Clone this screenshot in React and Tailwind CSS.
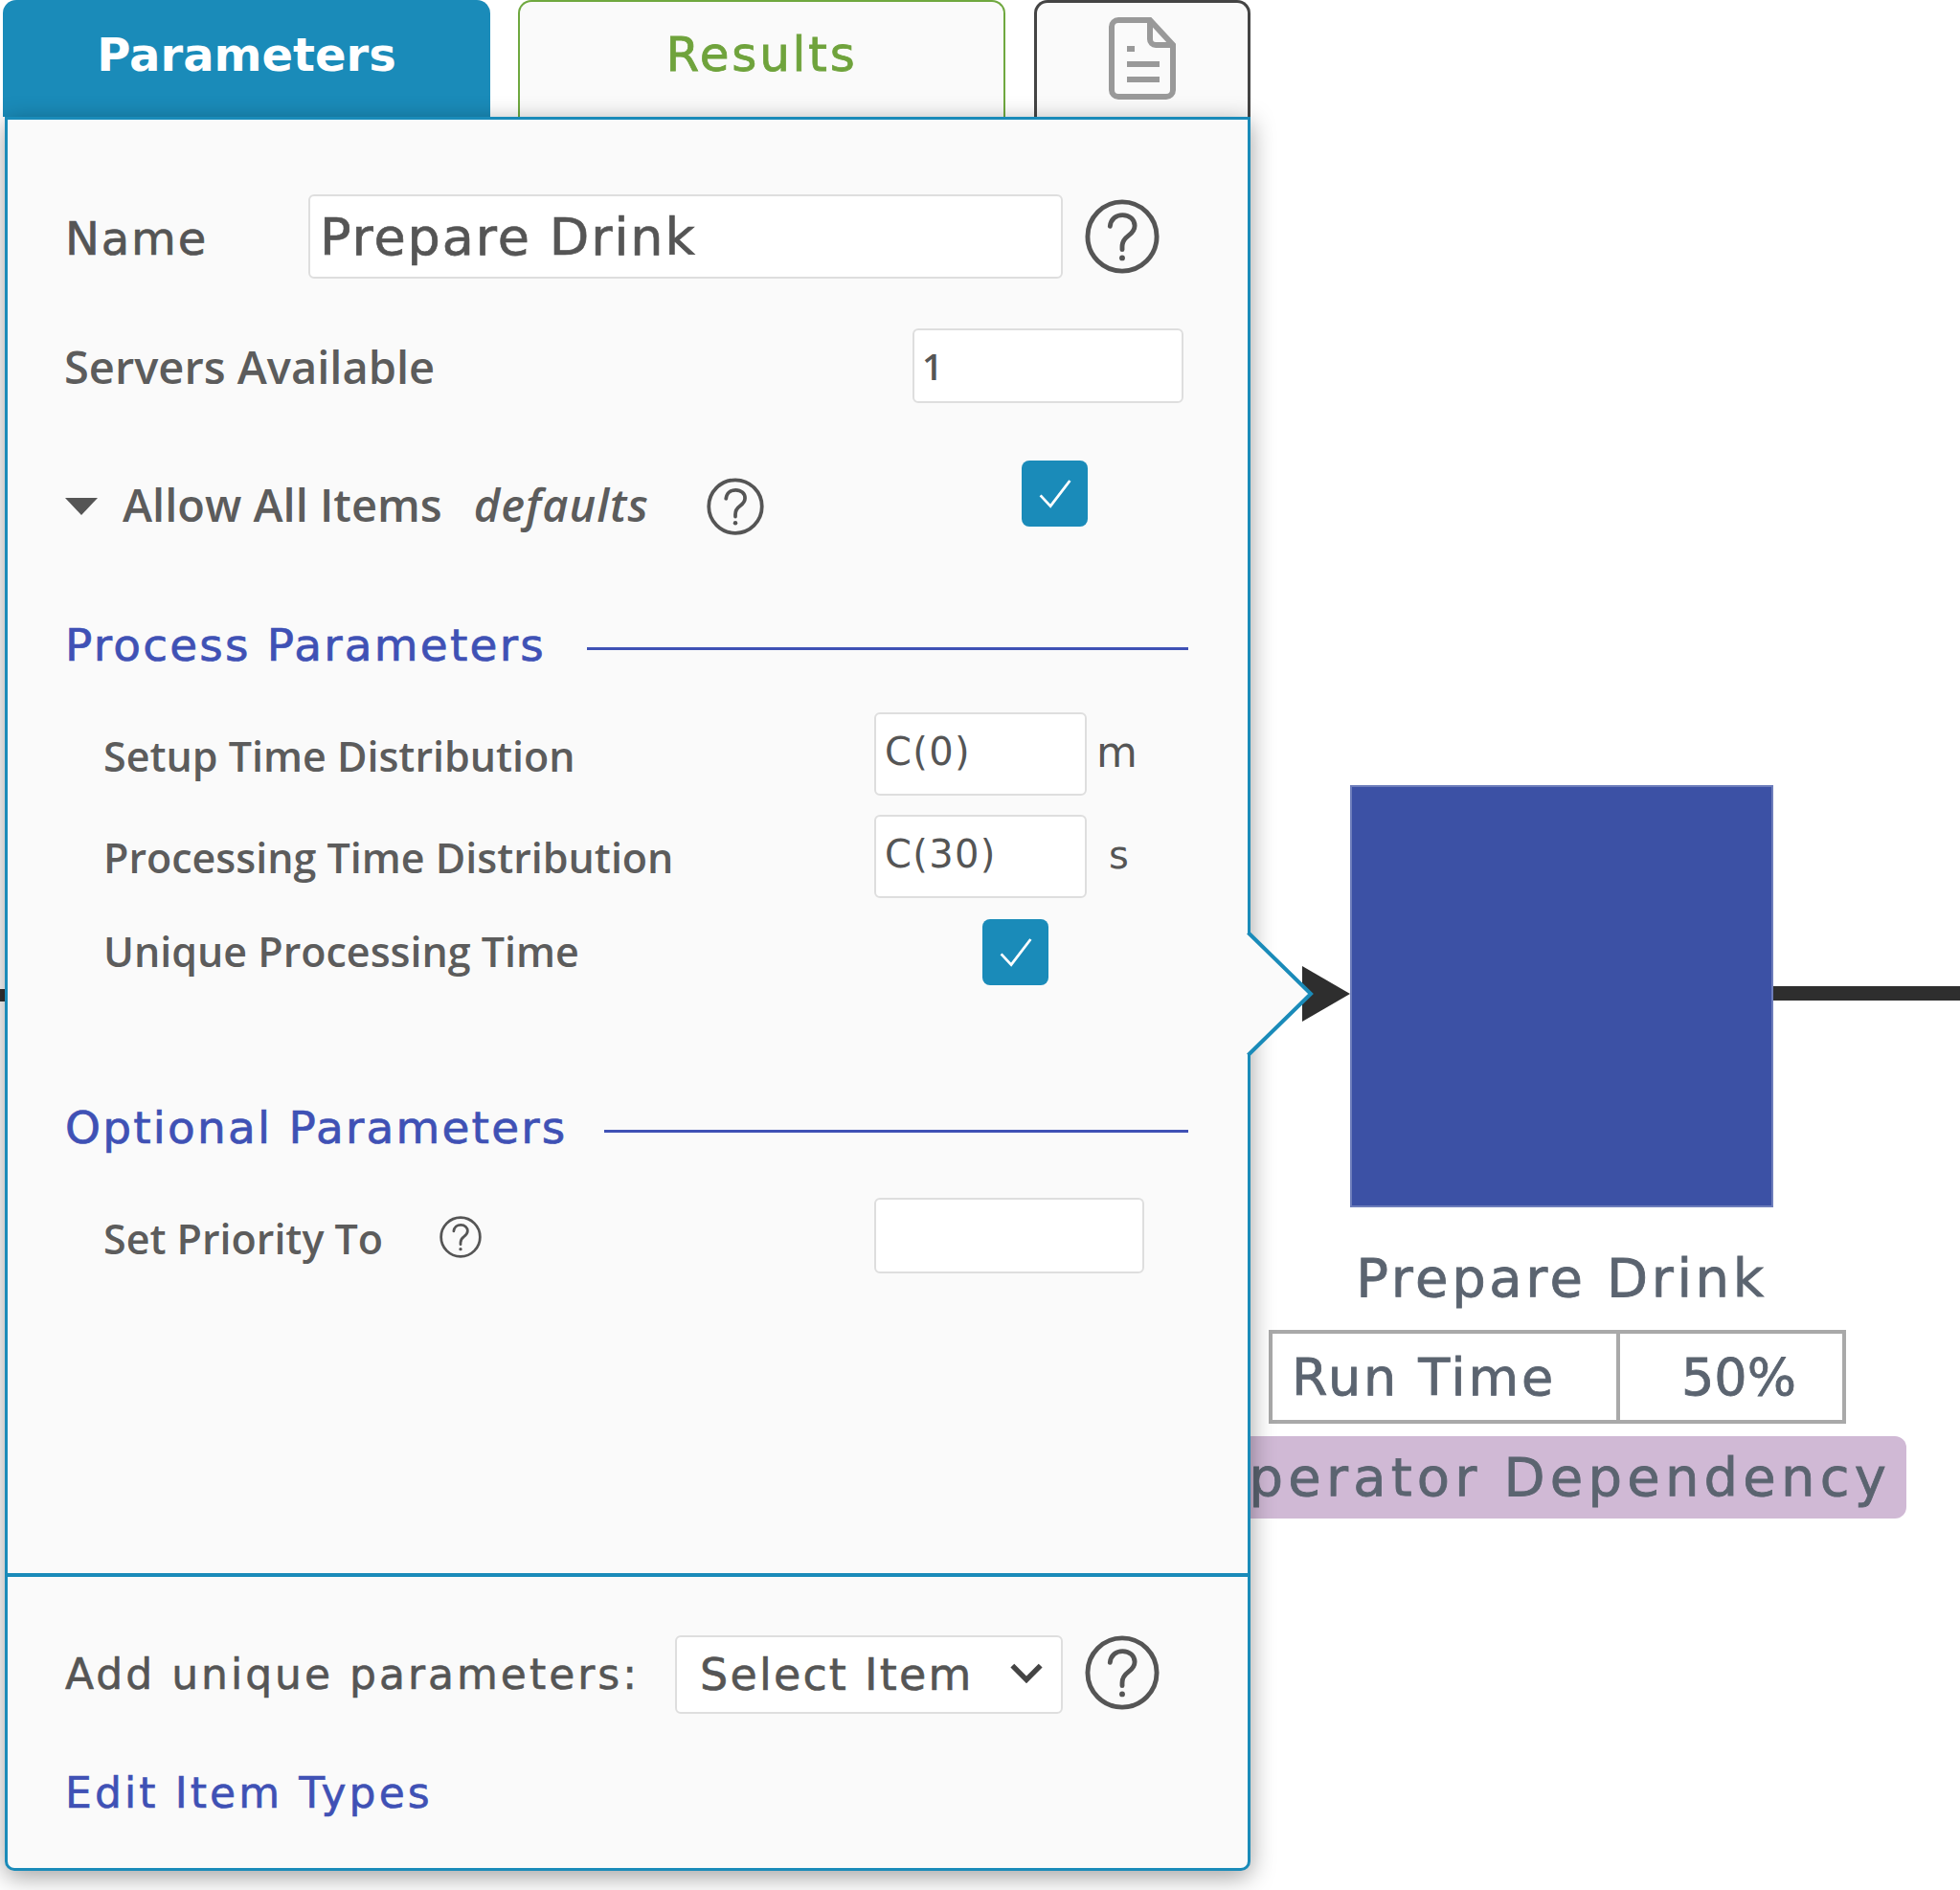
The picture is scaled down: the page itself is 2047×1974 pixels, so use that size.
const Help = ({ className }) => (
  <svg viewBox="0 0 40 40" className={className} fill="none" stroke="#555" strokeWidth="2.5">
    <circle cx="20" cy="20" r="18.5" />
    <path d="M13.5 14.5c.4-3.8 3.2-6 6.700-6 3.800 0 6.500 2.500 6.500 5.700 0 2.600-1.500 4-3.500 5.500-2.200 1.600-3.200 3-3.200 5.800v1.500" strokeLinecap="round" />
    <circle cx="20" cy="31.500" r="1.500" fill="#555" stroke="none" />
  </svg>
);

const Check = ({ className }) => (
  <div className={`flex items-center justify-center rounded-[8px] bg-[#1a8bb9] w-[69px] h-[69px] ${className}`}>
    <svg viewBox="0 0 40 40" className="w-[56px] h-[56px]" fill="none" stroke="#fff" strokeWidth="2">
      <path d="M9 21l7.500 8L31 10" />
    </svg>
  </div>
);

const TextBox = ({ value, className }) => (
  <input
    readOnly
    defaultValue={value}
    className={`rounded-[6px] border-2 border-[#dedede] bg-white text-[#555] outline-none ${className}`}
  />
);

const Heading = ({ children, lineClass }) => (
  <div className="flex items-center h-[50px] pl-[60px]">
    <span className="font-['DejaVu_Sans'] [-webkit-text-stroke:0.7px] text-[47px] tracking-[2.200px] text-[#3f51b5] whitespace-nowrap">{children}</span>
    <div className={`h-[3px] bg-[#3f51b5] mt-[6px] ${lineClass}`} />
  </div>
);

const Canvas = () => (
  <div className="absolute inset-0">
    <div className="absolute left-0 top-[1033px] w-[6px] h-[13px] bg-[#333]" />
    <div className="absolute left-[1410px] top-[820px] w-[442px] h-[441px] bg-[#3c51a5] border-2 border-[#6d7dbb]" />
    <svg className="absolute left-[1355px] top-[1005px] w-[57px] h-[66px]" viewBox="0 0 57 66">
      <path d="M5 4l50 29L5 62z" fill="#2e2e2e" />
    </svg>
    <div className="absolute left-[1852px] top-[1030px] w-[195px] h-[15px] bg-[#2e2e2e]" />
    <div className="absolute left-[1410px] top-[1305px] w-[442px] flex justify-center font-['DejaVu_Sans'] [-webkit-text-stroke:0.8px] text-[56px] leading-[60px] tracking-[3.600px] text-[#5b6470] whitespace-nowrap">
      Prepare Drink
    </div>
    <div className="absolute left-[1325px] top-[1389px] w-[603px] h-[98px] flex border-[4px] border-[#a9a9a9] bg-white font-['DejaVu_Sans'] [-webkit-text-stroke:0.8px] text-[54px] text-[#5b6470]">
      <div className="w-[363px] h-full flex items-center pl-[20px] border-r-[4px] border-[#a9a9a9] tracking-[2.900px]">Run Time</div>
      <div className="flex-1 flex items-center justify-center pl-[16px]">50%</div>
    </div>
    <div className="absolute left-[1269px] top-[1500px] w-[722px] h-[86px] flex items-center justify-end pr-[16px] rounded-[12px] bg-[#d0b9d5] font-['DejaVu_Sans'] [-webkit-text-stroke:0.8px] text-[56px] tracking-[5.200px] text-[#5b6470] whitespace-nowrap">
      Operator Dependency
    </div>
  </div>
);

const App = () => {
  return (
    <div className="relative w-[2047px] h-[1974px] bg-white overflow-hidden">
      <Canvas />
      <div className="absolute left-0 top-0 w-[1306px] z-10">
        <div className="flex h-[122px] pl-[3px]">
          <div className="w-[509px] flex items-center justify-center pb-[9px] rounded-t-[14px] bg-[#1a8bb9] text-white font-['DejaVu_Sans'] font-bold text-[48px]">Parameters</div>
          <div className="w-[509px] ml-[29px] flex items-center justify-center pb-[9px] rounded-t-[14px] border-2 border-b-0 border-[#6fa83f] bg-[#fafafa] text-[#6fa33c] font-['DejaVu_Sans'] [-webkit-text-stroke:0.8px] text-[50px] tracking-[2.800px]">Results</div>
          <div className="w-[226px] ml-[30px] flex items-center justify-center pb-[3px] rounded-t-[14px] border-[3px] border-b-0 border-[#444] bg-[#fafafa]">
            <svg viewBox="0 0 72 88" className="w-[72px] h-[88px]" fill="none" stroke="#999" strokeWidth="6">
              <path d="M44 4H11a7 7 0 0 0-7 7v66a7 7 0 0 0 7 7h50a7 7 0 0 0 7-7V30z" />
              <path d="M44 4v20a6 6 0 0 0 6 6h18" />
              <path d="M20 34h8M20 50h34M20 66h34" />
            </svg>
          </div>
        </div>

        <div className="relative ml-[5px] w-[1301px] h-[1832px] flex flex-col rounded-b-[10px] border-[3px] border-[#1a8bb9] bg-[#fafafa] shadow-[0_6px_26px_rgba(0,0,0,0.38)]">
          <svg className="absolute left-[1292px] top-[845px] w-[75px] h-[136px]" viewBox="0 0 75 136">
            <path d="M0 5h4.500L69 68 4.500 131H0z" fill="#fafafa" />
            <path d="M3.500 4L69 68 3.500 132" fill="none" stroke="#1a8bb9" strokeWidth="4" />
          </svg>

          <div className="h-[1518px]">
            <div className="flex items-center h-[88px] mt-[78px] pl-[60px]">
              <span className="w-[254px] pt-[3px] font-['DejaVu_Sans'] [-webkit-text-stroke:0.7px] text-[48px] tracking-[1.900px] text-[#555]">Name</span>
              <TextBox value="Prepare Drink" className="w-[788px] h-[88px] pl-[10px] font-['DejaVu_Sans'] [-webkit-text-stroke:0.7px] text-[54px] tracking-[1.900px]" />
              <Help className="w-[78px] h-[78px] ml-[23px]" />
            </div>
            <div className="flex items-center justify-between h-[78px] mt-[52px] pl-[59px] pr-[67px]">
              <span className="pt-[2px] font-['Open_Sans'] font-semibold text-[47px] text-[#5c5c5c]">Servers Available</span>
              <TextBox value="1" className="w-[283px] h-[78px] pl-[8px] font-['Open_Sans'] font-semibold text-[38px]" />
            </div>
            <div className="relative flex items-center h-[70px] mt-[71px] pl-[60px]">
              <svg viewBox="0 0 34 18" className="w-[34px] h-[18px] mt-[4px]"><path d="M0 0h34L17 18z" fill="#555" /></svg>
              <span className="ml-[26px] font-['Open_Sans'] font-semibold text-[47px] text-[#5c5c5c]">Allow All Items</span>
              <span className="ml-[33px] font-['Open_Sans'] font-semibold italic text-[47px] tracking-[1px] text-[#5c5c5c]">defaults</span>
              <Help className="w-[60px] h-[60px] ml-[60px] mt-[4px]" />
              <Check className="absolute left-[1059px] top-[-11px]" />
            </div>

            <div className="mt-[87px]">
              <Heading lineClass="w-[628px] ml-[43px]">Process Parameters</Heading>
            </div>
            <div className="flex items-center h-[87px] mt-[45px] pl-[100px]">
              <span className="w-[805px] pt-[5px] font-['Open_Sans'] font-semibold text-[43px] text-[#5c5c5c]">Setup Time Distribution</span>
              <TextBox value="C(0)" className="w-[222px] h-[87px] pl-[9px] pb-[6px] font-['DejaVu_Sans'] text-[40px] tracking-[1.300px]" />
              <span className="ml-[10px] font-['DejaVu_Sans'] text-[44px] text-[#555] pb-[4px]">m</span>
            </div>
            <div className="flex items-center h-[87px] mt-[20px] pl-[100px]">
              <span className="w-[805px] pt-[3px] font-['Open_Sans'] font-semibold text-[43px] text-[#5c5c5c]">Processing Time Distribution</span>
              <TextBox value="C(30)" className="w-[222px] h-[87px] pl-[9px] pb-[6px] font-['DejaVu_Sans'] text-[40px] tracking-[1.300px]" />
              <span className="ml-[23px] font-['DejaVu_Sans'] text-[40px] text-[#555] pb-[4px]">s</span>
            </div>
            <div className="flex items-center h-[69px] mt-[22px] pl-[100px]">
              <span className="w-[918px] font-['Open_Sans'] font-semibold text-[43px] text-[#5c5c5c]">Unique Processing Time</span>
              <Check />
            </div>

            <div className="mt-[124px]">
              <Heading lineClass="w-[610px] ml-[39px]">Optional Parameters</Heading>
            </div>
            <div className="flex items-center h-[79px] mt-[48px] pl-[100px]">
              <span className="w-[351px] pt-[8px] font-['Open_Sans'] font-semibold text-[43px] text-[#5c5c5c]">Set Priority To</span>
              <Help className="w-[44px] h-[44px] mt-[2px]" />
              <TextBox value="" className="w-[282px] h-[79px] ml-[410px]" />
            </div>
          </div>

          <div className="flex-1 border-t-[4px] border-[#1a8bb9]">
            <div className="flex items-center h-[82px] mt-[61px] pl-[60px]">
              <span className="w-[637px] font-['DejaVu_Sans'] [-webkit-text-stroke:0.6px] text-[44px] tracking-[3px] text-[#555] whitespace-nowrap">Add unique parameters:</span>
              <div className="relative w-[405px] h-[82px] flex items-center pl-[24px] rounded-[6px] border-2 border-[#dedede] bg-white font-['DejaVu_Sans'] [-webkit-text-stroke:0.6px] text-[46px] tracking-[2.200px] text-[#555]">
                Select Item
                <svg viewBox="0 0 38 24" className="absolute right-[18px] top-[26px] w-[36px] h-[22px]" fill="none" stroke="#444" strokeWidth="6">
                  <path d="M3 4l16 16L35 4" />
                </svg>
              </div>
              <Help className="w-[78px] h-[78px] ml-[23px] -mt-[4px]" />
            </div>
            <div className="mt-[50px] pl-[60px] font-['DejaVu_Sans'] [-webkit-text-stroke:0.6px] text-[44px] tracking-[3.100px] text-[#3f51b5]">Edit Item Types</div>
          </div>
        </div>
      </div>
    </div>
  );
};

export default App;
